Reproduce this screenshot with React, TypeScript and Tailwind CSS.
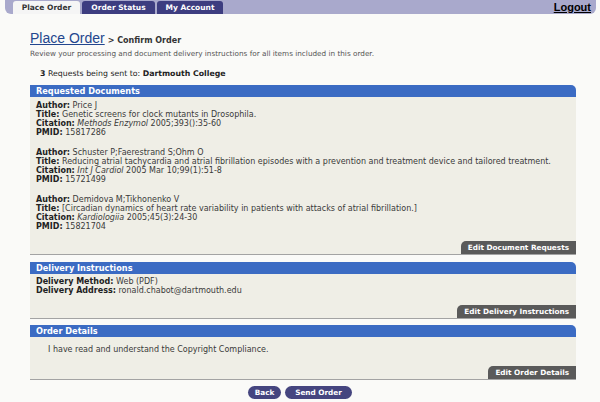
import React from 'react';

interface Doc {
  author: string;
  title: string;
  journal: string;
  cite: string;
  pmid: string;
}

const docs: Doc[] = [
  {
    author: 'Price J',
    title: 'Genetic screens for clock mutants in Drosophila.',
    journal: 'Methods Enzymol',
    cite: ' 2005;393():35-60',
    pmid: '15817286',
  },
  {
    author: 'Schuster P;Faerestrand S;Ohm O',
    title:
      'Reducing atrial tachycardia and atrial fibrillation episodes with a prevention and treatment device and tailored treatment.',
    journal: 'Int J Cardiol',
    cite: ' 2005 Mar 10;99(1):51-8',
    pmid: '15721499',
  },
  {
    author: 'Demidova M;Tikhonenko V',
    title: '[Circadian dynamics of heart rate variability in patients with attacks of atrial fibrillation.]',
    journal: 'Kardiologiia',
    cite: ' 2005;45(3):24-30',
    pmid: '15821704',
  },
];

function Panel({
  title,
  edit,
  children,
}: {
  title: string;
  edit: string;
  children: React.ReactNode;
}) {
  return (
    <section className="w-[546px]">
      <div className="h-[12px] bg-[#3b6bc3] rounded-tr-[5px] pl-[6px] text-[8.2px] leading-[12px] font-bold text-white">
        {title}
      </div>
      <div className="bg-[#efeee6] border-b border-[#a3a3a3] flex flex-col">
        <div className="pl-[6px] text-[#3a3a3a] text-[8px] leading-[9px]">{children}</div>
        <div className="flex justify-end">
          <div className="h-[13px] px-[7px] bg-[#5a5a5a] rounded-tl-[5px] text-white font-bold text-[7.3px] leading-[13px]">
            {edit}
          </div>
        </div>
      </div>
    </section>
  );
}

function Field({ label, children }: { label: string; children: React.ReactNode }) {
  return (
    <div className="whitespace-nowrap">
      <b className="text-[#222]">{label}:</b> {children}
    </div>
  );
}

export default function App() {
  return (
    <div className="w-[600px] h-[402px] overflow-hidden bg-[#fafaf8] font-['DejaVu_Sans',sans-serif]">
      <div className="ml-[5px] mr-[4px] h-[14px] bg-[#a9a9cc] rounded-b-[6px] flex items-end pl-[8px] pr-[5px]">
        <div className="h-[13px] w-[67px] bg-[#f5f5f5] rounded-t-[3px] text-[#333] font-bold text-[7.5px] leading-[13px] text-center">
          Place Order
        </div>
        <div className="ml-[2px] h-[13px] w-[73px] bg-[#3d3d80] rounded-t-[3px] text-white font-bold text-[7.5px] leading-[13px] text-center">
          Order Status
        </div>
        <div className="ml-[2px] h-[13px] w-[66px] bg-[#3d3d80] rounded-t-[3px] text-white font-bold text-[7.5px] leading-[13px] text-center">
          My Account
        </div>
        <a className="ml-auto self-center text-[11px] leading-[12px] font-bold text-black underline font-['Liberation_Sans',sans-serif]">
          Logout
        </a>
      </div>

      <main className="pl-[30px] flex flex-col">
        <div className="mt-[16px] flex items-baseline h-[16px]">
          <a className="text-[14px] leading-[16px] text-[#23468e] underline font-['Liberation_Sans',sans-serif]">
            Place Order
          </a>
          <span className="ml-[3px] text-[8px] font-bold text-[#333]">&gt; Confirm Order</span>
        </div>
        <p className="mt-[3px] text-[7.27px] leading-[9px] text-[#555]">
          Review your processing and document delivery instructions for all items included in this order.
        </p>
        <p className="mt-[11px] ml-[10px] text-[7.8px] leading-[10px] text-[#222]">
          <b>3</b> Requests being sent to: <b>Dartmouth College</b>
        </p>

        <div className="mt-[6px] flex flex-col">
          <Panel title="Requested Documents" edit="Edit Document Requests">
            <div className="flex flex-col gap-[11px] pt-[4px] pb-[10px]">
              {docs.map((d) => (
                <div key={d.pmid}>
                  <Field label="Author">{d.author}</Field>
                  <Field label="Title">{d.title}</Field>
                  <Field label="Citation">
                    <i>{d.journal}</i>
                    {d.cite}
                  </Field>
                  <Field label="PMID">{d.pmid}</Field>
                </div>
              ))}
            </div>
          </Panel>

          <div className="h-[7px]" />
          <Panel title="Delivery Instructions" edit="Edit Delivery Instructions">
            <div className="pt-[3px] pb-[10px]">
              <Field label="Delivery Method">Web (PDF)</Field>
              <Field label="Delivery Address">ronald.chabot@dartmouth.edu</Field>
            </div>
          </Panel>

          <div className="h-[6px]" />
          <Panel title="Order Details" edit="Edit Order Details">
            <div className="pl-[12px] pt-[8px] pb-[12px]">
              I have read and understand the Copyright Compliance.
            </div>
          </Panel>
        </div>

        <div className="mt-[6px] w-[546px] flex gap-[4px] pl-[218px]">
          <button className="h-[13px] w-[33px] rounded-full bg-[#45457f] text-white font-bold text-[7.3px] leading-[13px]">
            Back
          </button>
          <button className="h-[13px] w-[67px] rounded-full bg-[#45457f] text-white font-bold text-[7.3px] leading-[13px]">
            Send Order
          </button>
        </div>
      </main>
    </div>
  );
}
